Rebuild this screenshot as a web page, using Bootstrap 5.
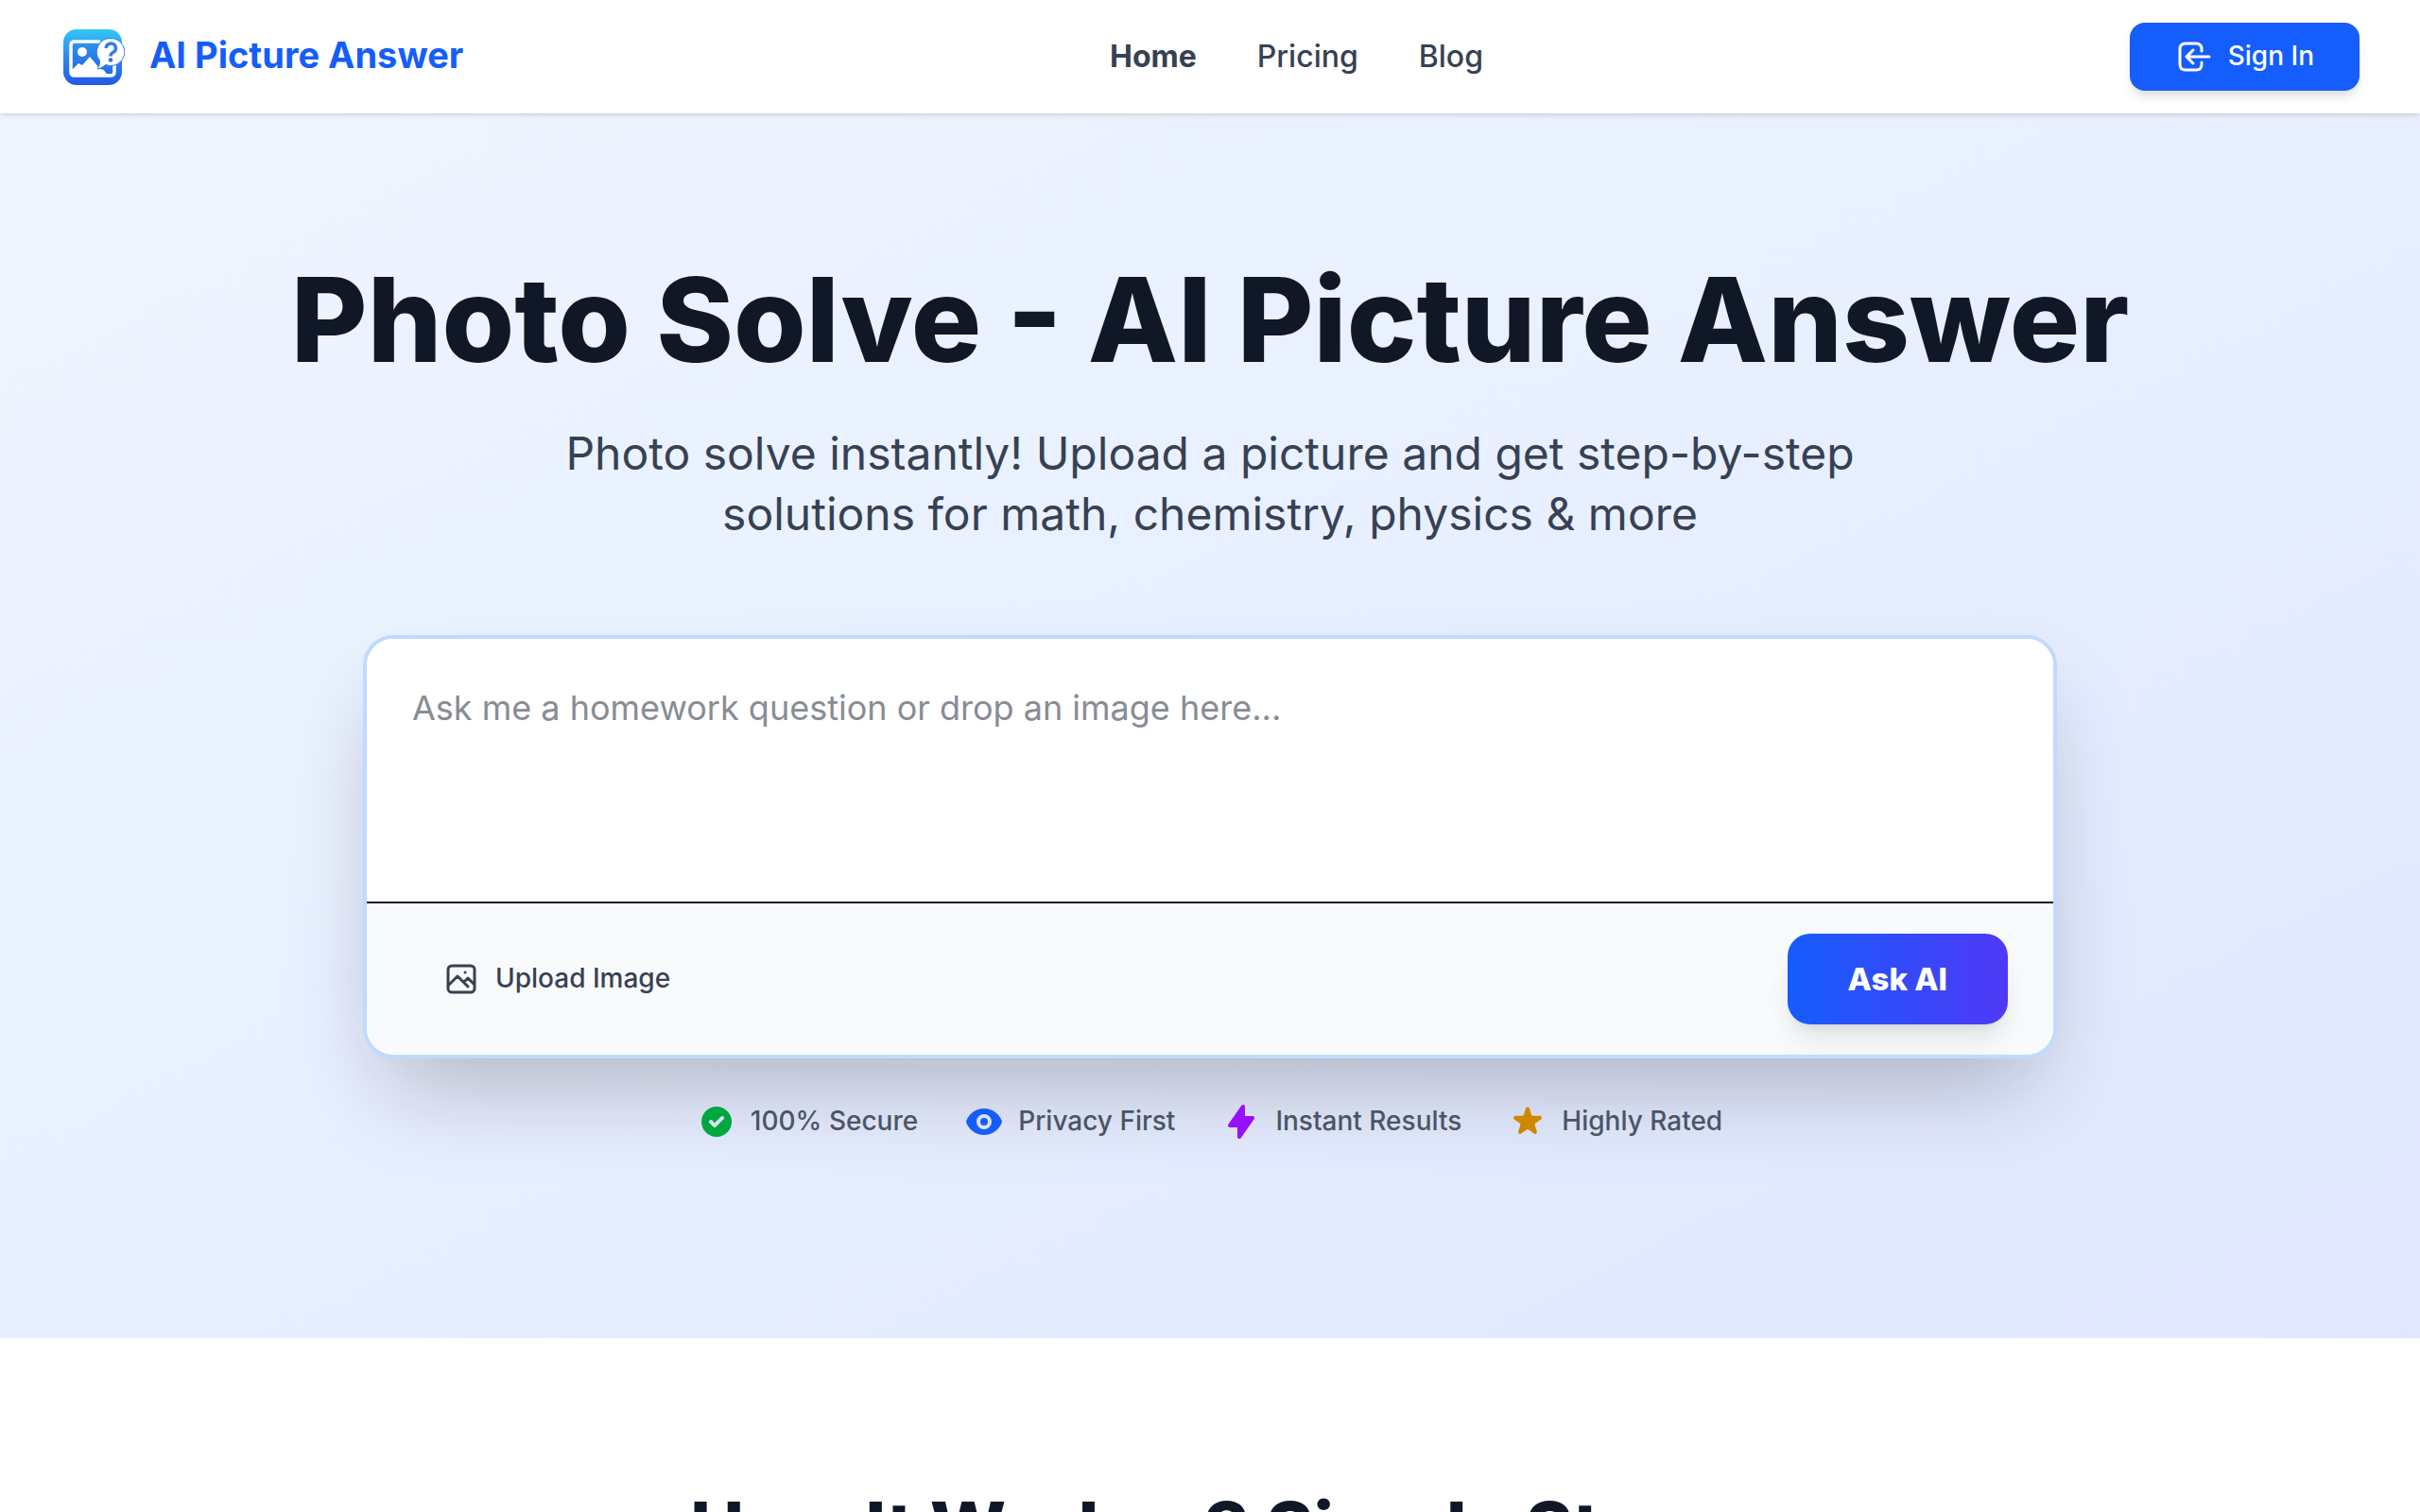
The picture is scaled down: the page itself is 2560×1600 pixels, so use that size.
<!DOCTYPE html>
<html lang="en">
<head>
<meta charset="utf-8">
<meta name="viewport" content="width=device-width, initial-scale=1">
<title>AI Picture Answer</title>
<link href="https://cdn.jsdelivr.net/npm/bootstrap@5.3.0/dist/css/bootstrap.min.css" rel="stylesheet">
<style>
  body { font-family: Inter, "Noto Sans", sans-serif; color: #101828; background: #fff; }
  .site-header { height: 120px; padding: 0 64px; background: #fff; z-index: 2;
    box-shadow: 0 2px 6px rgba(0,0,0,.1), 0 2px 4px -2px rgba(0,0,0,.1); }
  .brand-link { gap: 26px; font-size: 38px; line-height: 56px; font-weight: 700; color: #155dfc; }
  .brand-link span { padding-bottom: 4px; }
  .brand-link svg { width: 68px; height: 64px; }
  .main-nav { gap: 64px; font-size: 32px; line-height: 48px; }
  .main-nav a { color: #364153; font-weight: 500; text-decoration: none; }
  .main-nav a.active { font-weight: 700; }
  .signin-btn, .signin-btn:hover { height: 72px; padding: 0 48px; gap: 16px; border: 0; border-radius: 16px; background: #155dfc; color: #fff;
    font-size: 28px; line-height: 40px; font-weight: 500; box-shadow: 0 8px 12px -2px rgba(0,0,0,.1), 0 4px 8px -4px rgba(0,0,0,.1); }
  .signin-btn svg { width: 40px; height: 40px; }
  .signin-btn span, .upload-btn span, .trust-list span { padding-bottom: 2px; }
  .hero { padding: 160px 64px 208px; background: linear-gradient(to bottom right, #eff6ff, #e0e7ff); }
  .hero h1 { font-size: 124px; line-height: 116px; font-weight: 800; margin-bottom: 52px; }
  .hero-sub { max-width: 1536px; font-size: 48px; line-height: 64px; color: #364153; margin-bottom: 96px; }
  .ask-card { max-width: 1792px; border: 4px solid #bedbff; border-radius: 32px; background: #fff; overflow: hidden;
    box-shadow: 0 50px 100px -24px rgba(0,0,0,.25); }
  .ask-input { display: block; width: 100%; height: 278px; padding: 48px; border: 0; resize: none; outline: 0;
    font-size: 36px; line-height: 50px; color: #101828; background: #fff; }
  .ask-input::placeholder { color: #888c94; opacity: 1; }
  .ask-bar { padding: 32px 48px; border-top: 2px solid #101828; background: #f9fafb; }
  .upload-btn, .upload-btn:hover { padding: 16px 32px; gap: 16px; border: 0; font-size: 28px; line-height: 40px; font-weight: 500; color: #364153; background: transparent; }
  .upload-btn svg { width: 40px; height: 40px; }
  .ask-btn, .ask-btn:hover { height: 96px; padding: 0 64px; border: 0; border-radius: 24px; color: #fff; font-size: 33px; line-height: 48px; font-weight: 800;
    background: linear-gradient(to right, #155dfc, #4f39f6); box-shadow: 0 20px 30px -6px rgba(0,0,0,.1), 0 8px 12px -8px rgba(0,0,0,.1); }
  .trust-list { gap: 50px; margin: 46px 0 0; font-size: 28px; line-height: 40px; font-weight: 500; color: #4a5565; }
  .trust-list li { display: flex; align-items: center; gap: 16px; }
  .trust-list svg { width: 40px; height: 40px; }
  .steps { padding: 160px 64px; }
  .steps h2 { font-size: 76px; line-height: 80px; font-weight: 800; }
</style>
</head>
<body>
<header class="site-header position-relative d-flex align-items-center justify-content-between">
  <a class="brand-link d-flex align-items-center text-decoration-none" href="#">
    <svg viewBox="0 0 68 64" aria-hidden="true">
      <defs><linearGradient id="logoFill" x1="0" y1="0" x2="0" y2="1"><stop offset="0" stop-color="#31c8f8"/><stop offset=".45" stop-color="#2f8cec"/><stop offset="1" stop-color="#2358e8"/></linearGradient></defs>
      <rect x="3" y="3" width="62" height="59" rx="14" fill="url(#logoFill)"/>
      <path d="M11 19q0-3 3-3h27v27l13 6H11z" fill="#2358e8" opacity=".25"/>
      <path d="M42 16H15q-4 0-4 4v28q0 4 4 4h38q4 0 4-4v-8" fill="none" stroke="#fff" stroke-width="3.5"/>
      <circle cx="23" cy="27" r="5" fill="#fff"/>
      <path d="M12 46l7-7 4 2 8-9 11 13 4 1q2 5 7 5l-2 2H12z" fill="#fff"/>
      <path d="M53 12.500a14.500 14.500 0 1 1-5 28q-5 4-9 4.500 3-4 2.500-9A14.500 14.500 0 0 1 53 12.500z" fill="#fff" stroke="#2f7eec" stroke-width="1"/>
      <path d="M48 23q1-5 5.500-5t5 5q0 3-3 4.500-2.500 1-2.500 4" fill="none" stroke="#2e7fea" stroke-width="3.500"/>
      <circle cx="53" cy="35.500" r="2.300" fill="#2e74ea"/>
    </svg>
    <span>AI Picture Answer</span>
  </a>
  <nav class="main-nav d-flex" aria-label="Main"><a class="active" href="#">Home</a><a href="#">Pricing</a><a href="#">Blog</a></nav>
  <button class="btn signin-btn d-flex align-items-center" type="button">
    <svg viewBox="0 0 40 40" fill="none" stroke="#fff" stroke-width="3" stroke-linecap="round" stroke-linejoin="round" aria-hidden="true"><path d="M28 14v-2q0-6-6-6h-11q-6 0-6 6v16q0 6 6 6h11q6 0 6-6v-2M36 20H12M19 13l-7 7 7 7"/></svg>
    <span>Sign In</span>
  </button>
</header>
<main>
  <section class="hero text-center">
    <h1>Photo Solve - AI Picture Answer</h1>
    <p class="hero-sub mx-auto">Photo solve instantly! Upload a picture and get step-by-step solutions for math, chemistry, physics &amp; more</p>
    <form class="ask-card mx-auto">
      <textarea class="ask-input" aria-label="Homework question" placeholder="Ask me a homework question or drop an image here..."></textarea>
      <div class="ask-bar d-flex align-items-center justify-content-between">
        <button class="btn upload-btn d-flex align-items-center" type="button">
          <svg viewBox="0 0 40 40" fill="none" stroke="#364153" stroke-width="3" stroke-linecap="round" stroke-linejoin="round" aria-hidden="true"><rect x="6" y="6" width="28" height="28" rx="4"/><path d="M7 26l9-9 11 11M23 23l4-4 6 6M24 13h.1"/></svg>
          <span>Upload Image</span>
        </button>
        <button class="btn ask-btn" type="button">Ask AI</button>
      </div>
    </form>
    <ul class="trust-list list-unstyled d-flex justify-content-center">
      <li><svg viewBox="0 0 20 20" fill="#00a63e" fill-rule="evenodd" aria-hidden="true"><path d="M10 18a8 8 0 100-16 8 8 0 000 16zm3.707-9.293a1 1 0 00-1.414-1.414L9 10.586 7.707 9.293a1 1 0 00-1.414 1.414l2 2a1 1 0 001.414 0l4-4z"/></svg><span>100% Secure</span></li>
      <li><svg viewBox="0 0 20 20" fill="#155dfc" fill-rule="evenodd" aria-hidden="true"><path d="M10 12a2 2 0 100-4 2 2 0 000 4z"/><path d="M.458 10C1.732 5.943 5.522 3 10 3s8.268 2.943 9.542 7c-1.274 4.057-5.064 7-9.542 7S1.732 14.057.458 10zM14 10a4 4 0 11-8 0 4 4 0 018 0z"/></svg><span>Privacy First</span></li>
      <li><svg viewBox="0 0 20 20" fill="#9810fa" fill-rule="evenodd" aria-hidden="true"><path d="M11.3 1.046A1 1 0 0112 2v5h4a1 1 0 01.82 1.573l-7 10A1 1 0 018 18v-5H4a1 1 0 01-.82-1.573l7-10a1 1 0 011.12-.38z"/></svg><span>Instant Results</span></li>
      <li><svg viewBox="0 0 20 20" fill="#d08700" aria-hidden="true"><path d="M9.049 2.927c.3-.921 1.603-.921 1.902 0l1.07 3.292a1 1 0 00.95.69h3.462c.969 0 1.371 1.24.588 1.81l-2.8 2.034a1 1 0 00-.364 1.118l1.07 3.292c.3.921-.755 1.688-1.54 1.118l-2.8-2.034a1 1 0 00-1.175 0l-2.8 2.034c-.784.57-1.838-.197-1.539-1.118l1.07-3.292a1 1 0 00-.364-1.118L2.98 8.72c-.783-.57-.38-1.81.588-1.81h3.461a1 1 0 00.951-.69l1.07-3.292z"/></svg><span>Highly Rated</span></li>
    </ul>
  </section>
  <section class="steps text-center"><h2>How It Works: 3 Simple Steps</h2></section>
</main>
<script src="https://cdn.jsdelivr.net/npm/bootstrap@5.3.0/dist/js/bootstrap.bundle.min.js"></script>
</body>
</html>
